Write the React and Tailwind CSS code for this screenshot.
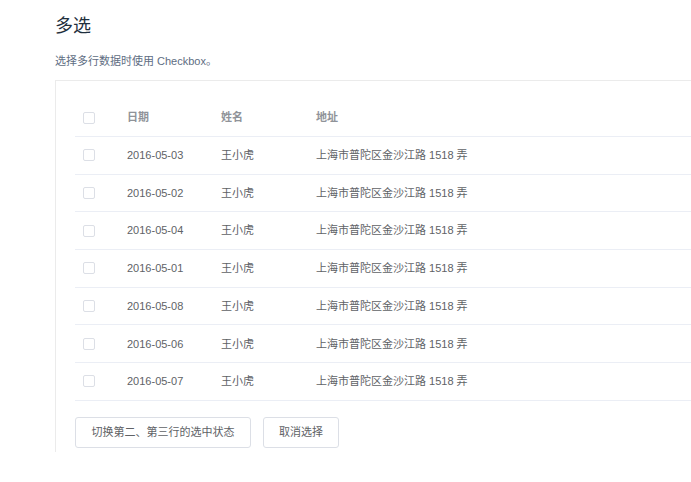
import React from "react";

const rows = ["2016-05-03", "2016-05-02", "2016-05-04", "2016-05-01", "2016-05-08", "2016-05-06", "2016-05-07"];

function Box() {
  return <span className="block w-[12px] h-[12px] border border-[#dcdfe6] rounded-[2px] bg-white" />;
}

export default function App() {
  const font = { fontFamily: '"Liberation Sans", "Noto Sans CJK SC", sans-serif' };
  return (
    <div className="w-[691px] h-[482px] overflow-hidden bg-white" style={font}>
      <div className="pl-[55px] pt-[13px]">
        <h2 className="text-[18px] leading-[26px] text-[#1f2f3d] font-normal">多选</h2>
        <p className="mt-[14px] text-[11px] leading-[17px] text-[#5e6d82]">选择多行数据时使用 Checkbox。</p>
        <div className="mt-[10px] w-[700px] border-t border-l border-r border-[#ebebeb] pt-[18px] pl-[19px] pb-[4px]">
          <div className="w-[680px] text-[11px]">
            <div className="flex h-[38px] items-center border-b border-[#ebeef5] text-[#909399] font-semibold">
              <div className="w-[42px] pl-[8px]"><Box /></div>
              <div className="w-[94px] pl-[10px]">日期</div>
              <div className="w-[95px] pl-[10px]">姓名</div>
              <div className="flex-1 pl-[10px]">地址</div>
            </div>
            {rows.map((d) => (
              <div key={d} className="flex h-[37.7px] items-center border-b border-[#ebeef5] text-[#606266]">
                <div className="w-[42px] pl-[8px]"><Box /></div>
                <div className="w-[94px] pl-[10px]">{d}</div>
                <div className="w-[95px] pl-[10px]">王小虎</div>
                <div className="flex-1 pl-[10px]">上海市普陀区金沙江路 1518 弄</div>
              </div>
            ))}
          </div>
          <div className="mt-[16px] flex gap-[12px]">
            <button className="h-[31px] w-[176px] border border-[#dcdfe6] rounded-[3px] bg-white text-[11px] text-[#606266]">切换第二、第三行的选中状态</button>
            <button className="h-[31px] w-[76px] border border-[#dcdfe6] rounded-[3px] bg-white text-[11px] text-[#606266]">取消选择</button>
          </div>
        </div>
      </div>
    </div>
  );
}
